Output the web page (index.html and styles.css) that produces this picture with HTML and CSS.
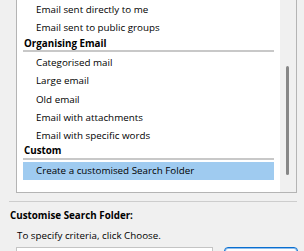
FILE: index.html
```html
<!DOCTYPE html>
<html lang="en">
<head>
<meta charset="utf-8">
<title>New Search Folder</title>
<link rel="stylesheet" href="styles.css">
</head>
<body>
<div class="dialog">
  <div class="list">
    <div class="items">
      <div class="group">
        <div class="item">Email sent directly to me</div>
        <div class="item">Email sent to public groups</div>
      </div>
      <div class="group">
        <div class="group-header">Organising Email</div>
        <div class="item first">Categorised mail</div>
        <div class="item">Large email</div>
        <div class="item">Old email</div>
        <div class="item">Email with attachments</div>
        <div class="item">Email with specific words</div>
      </div>
      <div class="group">
        <div class="group-header">Custom</div>
        <div class="item first selected">Create a customised Search Folder</div>
      </div>
    </div>
    <div class="scrollbar"><div class="thumb"></div></div>
  </div>
  <div class="separator"></div>
  <div class="section">
    <div class="section-title">Customise Search Folder:</div>
    <div class="hint">To specify criteria, click Choose.</div>
    <div class="choose-row">
      <div class="criteria-box"></div>
      <button class="choose-btn" type="button">Choose...</button>
    </div>
  </div>
</div>
</body>
</html>
```
FILE: styles.css
```css
html, body {
  margin: 0;
  padding: 0;
  background: #f0f0f0;
  overflow: hidden;
}
body {
  font-family: "Open Sans", "Noto Sans", sans-serif;
  font-size: 9.8px;
  color: #000;
}
.dialog {
  display: flex;
  flex-direction: column;
}
.list {
  margin-left: 16px;
  width: 281px;
  height: 193px;
  box-sizing: border-box;
  background: #fff;
  border: 1px solid #b4b4b4;
  border-top: none;
  display: flex;
  overflow: hidden;
}
.items {
  flex: 1;
  padding-top: 1px;
}
.group {
  margin: 0 6px;
}
.item {
  height: 18.25px;
  line-height: 18.25px;
  padding-left: 13px;
  white-space: nowrap;
}
.item.first {
  margin-top: 2.2px;
}
.item.selected {
  height: 18px;
  line-height: 18px;
  background: #9fcbf0;
}
.group-header {
  font-weight: 700;
  line-height: 11px;
  padding-left: 1px;
  padding-bottom: 1.5px;
  border-bottom: 2px solid #c8c8c8;
}
.scrollbar {
  width: 16px;
  background: #f0f0f0;
  padding-left: 6px;
  box-sizing: border-box;
}
.thumb {
  width: 3px;
  height: 109px;
  margin-top: 66px;
  background: #878787;
  border-radius: 2px;
}
.separator {
  margin: 8px 0 0 9px;
  width: 288px;
  border-top: 1px solid #cdcdcd;
}
.section {
  display: flex;
  flex-direction: column;
}
.section-title {
  font-weight: 700;
  line-height: 16px;
  margin: 5.5px 0 0 10px;
}
.hint {
  line-height: 16px;
  margin: 4px 0 0 17px;
}
.choose-row {
  display: flex;
  gap: 11px;
  margin: 3.5px 0 0 16px;
  height: 26px;
}
.criteria-box {
  width: 197px;
  box-sizing: border-box;
  background: #fff;
  border: 1px solid #c4c4c4;
}
.choose-btn {
  width: 74px;
  box-sizing: border-box;
  background: #fdfdfd;
  border: 1px solid #0a6fd0;
  box-shadow: inset 0 0 0 1px #8fbdec;
  border-radius: 4px;
  font: inherit;
  line-height: 14px;
  padding: 8px 0 0;
  display: flex;
  align-items: flex-start;
  justify-content: center;
}
```
